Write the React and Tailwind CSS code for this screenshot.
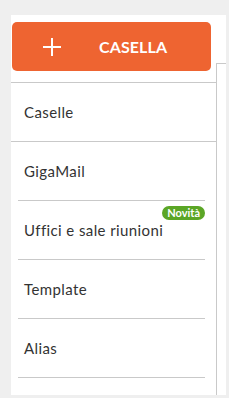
import React from 'react';

const items = [
    { label: 'GigaMail' },
    { label: 'Uffici e sale riunioni', badge: 'Novità' },
    { label: 'Template' },
    { label: 'Alias' },
];

export default function App() {
    return (
        <div className="w-[229px] h-[398px] overflow-hidden bg-[#efefef] pt-[15px] pl-[11px] pr-[3px] font-['Lato','Liberation_Sans',sans-serif]">
            <div className="bg-white h-[380px] flex flex-col">
                {/* New mailbox button */}
                <div className="pt-[7px] pl-[1px] relative z-10 mb-[-8px]">
                    <button className="w-[199px] h-[49px] rounded-[5px] bg-[#ee6431] flex items-center text-white">
                        <svg className="ml-[30px] w-[20px] h-[20px]" viewBox="0 0 20 20" fill="none" stroke="currentColor" strokeWidth="2">
                            <path d="M10 1v18M1 10h18" />
                        </svg>
                        <span className="ml-[37px] text-[16px] font-bold tracking-[0.1px]">CASELLA</span>
                    </button>
                </div>

                {/* Menu */}
                <div className="flex flex-1">
                    <div className="w-[206px] border-r border-[#c9c9c9] pt-[19px]">
                        <div className="h-[60px] border-y border-[#c9c9c9] flex items-center pl-[13px] text-[15px] tracking-[0.4px] text-[#333]">
                            Caselle
                        </div>
                        {items.map((item) => (
                            <div key={item.label} className="ml-[7px] mr-[11px] h-[59px] border-b border-[#c9c9c9] relative flex items-center pl-[6px] text-[15px] tracking-[0.4px] text-[#333]">
                                {item.label}
                                {item.badge && (
                                    <span className="absolute right-0 top-[5px] h-[14px] px-[5px] rounded-full bg-[#5ba626] text-white text-[11px] font-bold leading-[14px] tracking-normal">
                                        {item.badge}
                                    </span>
                                )}
                            </div>
                        ))}
                    </div>
                    <div className="flex-1 border-t border-[#c9c9c9]" />
                </div>
            </div>
        </div>
    );
}
